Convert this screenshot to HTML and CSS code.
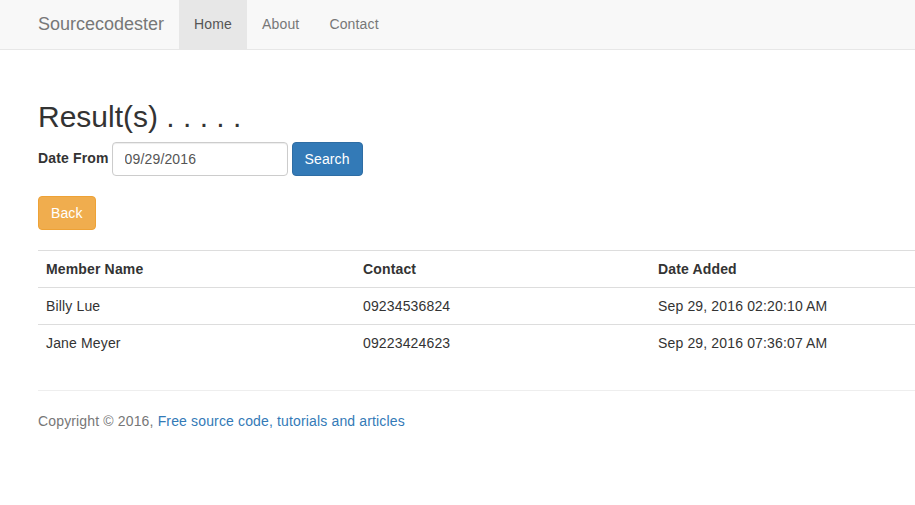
FILE: index.html
```html
<!DOCTYPE html>
<html>
<head>
<meta charset="utf-8">
<title>Result(s)</title>
<link rel="stylesheet" href="styles.css">
</head>
<body>
<nav class="navbar">
  <a class="brand" href="#">Sourcecodester</a>
  <ul class="nav">
    <li class="active"><a href="#">Home</a></li>
    <li><a href="#">About</a></li>
    <li><a href="#">Contact</a></li>
  </ul>
</nav>
<main class="main">
  <h2 class="title">Result(s) . . . . .</h2>
  <form class="search-form">
    <label class="label">Date From</label>
    <input class="input" type="text" value="09/29/2016">
    <button class="btn btn-primary" type="button">Search</button>
  </form>
  <button class="btn btn-warning back" type="button">Back</button>
  <table class="table">
    <tr><th class="c1">Member Name</th><th class="c2">Contact</th><th>Date Added</th></tr>
    <tr><td>Billy Lue</td><td>09234536824</td><td>Sep 29, 2016 02:20:10 AM</td></tr>
    <tr><td>Jane Meyer</td><td>09223424623</td><td>Sep 29, 2016 07:36:07 AM</td></tr>
  </table>
  <hr class="rule">
  <footer class="footer">Copyright © 2016, <a href="#">Free source code, tutorials and articles</a></footer>
</main>
</body>
</html>
```
FILE: styles.css
```css
* { box-sizing: border-box; }
html, body { margin: 0; padding: 0; background: #fff; }
body {
  font-family: "Liberation Sans", Arial, sans-serif;
  font-size: 14px;
  line-height: 20px;
  color: #333;
  letter-spacing: 0.15px;
}
a { text-decoration: none; }

.navbar {
  display: flex;
  height: 50px;
  background: #f8f8f8;
  border-bottom: 1px solid #e7e7e7;
  padding-left: 23px;
}
.brand {
  display: block;
  padding: 14px 15px 15px;
  font-size: 18px;
  line-height: 20px;
  letter-spacing: 0;
  color: #777;
}
.nav { display: flex; list-style: none; margin: 0; padding: 0; }
.nav a {
  display: block;
  padding: 14px 15px 15px;
  line-height: 20px;
  color: #777;
}
.nav .active a { background: #e7e7e7; color: #555; }

.main { padding: 50px 0 0 38px; }
.title {
  margin: 0 0 9px;
  font-size: 30px;
  line-height: 33px;
  font-weight: 500;
  letter-spacing: 0;
  color: #333;
}
.search-form { display: flex; align-items: center; margin: 0; }
.label { font-weight: bold; margin-right: 3px; margin-top: -2px; }
.input {
  width: 176px;
  height: 34px;
  padding: 6px 12px;
  border: 1px solid #ccc;
  border-radius: 4px;
  font: inherit;
  letter-spacing: 0.15px;
  color: #555;
  box-shadow: inset 0 1px 1px rgba(0,0,0,.075);
}
.btn {
  display: inline-block;
  height: 34px;
  padding: 6px 12px;
  font: inherit;
  letter-spacing: 0.1px;
  line-height: 20px;
  border: 1px solid transparent;
  border-radius: 4px;
  color: #fff;
}
.btn-primary { background: #337ab7; border-color: #2e6da4; margin-left: 4px; }
.btn-warning { background: #f0ad4e; border-color: #eea236; }
.back { display: block; margin-top: 20px; }

.table { width: 100%; border-collapse: collapse; margin-top: 20px; }
.table th, .table td {
  padding: 8px;
  line-height: 20px;
  text-align: left;
  border-top: 1px solid #ddd;
}
.table th { font-weight: bold; }
.c1 { width: 317px; }
.c2 { width: 295px; }

.rule { margin: 29px 0 20px; border: 0; border-top: 1px solid #eee; height: 0; }
.footer { color: #777; }
.footer a { color: #337ab7; }
```
